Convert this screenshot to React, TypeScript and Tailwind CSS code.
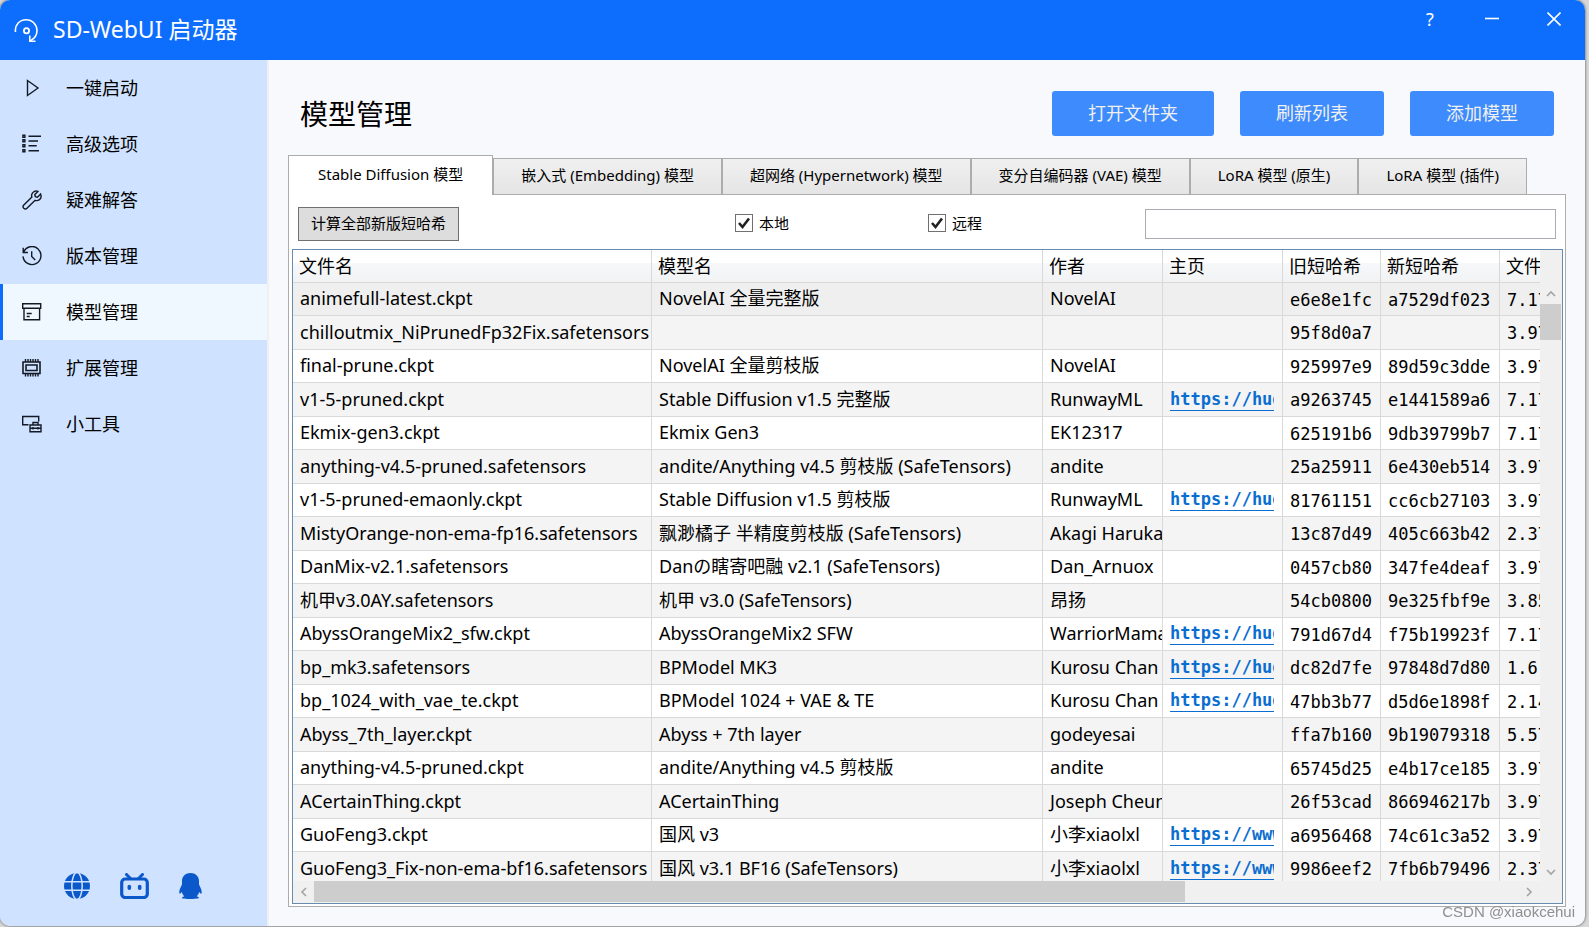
import { useState } from 'react'
import type { ReactNode } from 'react'

const models = [
  ['animefull-latest.ckpt', 'NovelAI 全量完整版', 'NovelAI', '', 'e6e8e1fc', 'a7529df023', '7.17'],
  ['chilloutmix_NiPrunedFp32Fix.safetensors', '', '', '', '95f8d0a7', '', '3.97'],
  ['final-prune.ckpt', 'NovelAI 全量剪枝版', 'NovelAI', '', '925997e9', '89d59c3dde', '3.97'],
  ['v1-5-pruned.ckpt', 'Stable Diffusion v1.5 完整版', 'RunwayML', 'https://hug', 'a9263745', 'e1441589a6', '7.17'],
  ['Ekmix-gen3.ckpt', 'Ekmix Gen3', 'EK12317', '', '625191b6', '9db39799b7', '7.17'],
  ['anything-v4.5-pruned.safetensors', 'andite/Anything v4.5 剪枝版 (SafeTensors)', 'andite', '', '25a25911', '6e430eb514', '3.97'],
  ['v1-5-pruned-emaonly.ckpt', 'Stable Diffusion v1.5 剪枝版', 'RunwayML', 'https://hug', '81761151', 'cc6cb27103', '3.97'],
  ['MistyOrange-non-ema-fp16.safetensors', '飘渺橘子 半精度剪枝版 (SafeTensors)', 'Akagi Haruka', '', '13c87d49', '405c663b42', '2.37'],
  ['DanMix-v2.1.safetensors', 'Danの瞎寄吧融 v2.1 (SafeTensors)', 'Dan_Arnuox', '', '0457cb80', '347fe4deaf', '3.97'],
  ['机甲v3.0AY.safetensors', '机甲 v3.0 (SafeTensors)', '昂扬', '', '54cb0800', '9e325fbf9e', '3.85'],
  ['AbyssOrangeMix2_sfw.ckpt', 'AbyssOrangeMix2 SFW', 'WarriorMama', 'https://hug', '791d67d4', 'f75b19923f', '7.17'],
  ['bp_mk3.safetensors', 'BPModel MK3', 'Kurosu Chan', 'https://hug', 'dc82d7fe', '97848d7d80', '1.6'],
  ['bp_1024_with_vae_te.ckpt', 'BPModel 1024 + VAE & TE', 'Kurosu Chan', 'https://hug', '47bb3b77', 'd5d6e1898f', '2.14'],
  ['Abyss_7th_layer.ckpt', 'Abyss + 7th layer', 'godeyesai', '', 'ffa7b160', '9b19079318', '5.57'],
  ['anything-v4.5-pruned.ckpt', 'andite/Anything v4.5 剪枝版', 'andite', '', '65745d25', 'e4b17ce185', '3.97'],
  ['ACertainThing.ckpt', 'ACertainThing', 'Joseph Cheung', '', '26f53cad', '866946217b', '3.97'],
  ['GuoFeng3.ckpt', '国风 v3', '小李xiaolxl', 'https://www', 'a6956468', '74c61c3a52', '3.97'],
  ['GuoFeng3_Fix-non-ema-bf16.safetensors', '国风 v3.1 BF16 (SafeTensors)', '小李xiaolxl', 'https://www', '9986eef2', '7fb6b79496', '2.37'],
]

const columns = ['文件名', '模型名', '作者', '主页', '旧短哈希', '新短哈希', '文件大小']

const tabs = [
  'Stable Diffusion 模型',
  '嵌入式 (Embedding) 模型',
  '超网络 (Hypernetwork) 模型',
  '变分自编码器 (VAE) 模型',
  'LoRA 模型 (原生)',
  'LoRA 模型 (插件)',
]

const Icon = ({ children }: { children: ReactNode }) => (
  <svg width="20" height="20" viewBox="0 0 20 20" fill="none" stroke="#141a24" strokeWidth="1.4" aria-hidden="true">
    {children}
  </svg>
)

const navItems = [
  { label: '一键启动', icon: <Icon><path d="M5.5 2.5v15L16 10z" /></Icon> },
  {
    label: '高级选项',
    icon: (
      <Icon>
        <path d="M.9 1.2h2v2h-2zM.9 5.8h2v2h-2zM.9 10.8h2v2h-2zM.9 15.8h2v2h-2z" />
        <path d="M6.5 2.2H19M6.5 7H16M6.5 11.8h8.2M6.5 16.8H17" />
      </Icon>
    ),
  },
  {
    label: '疑难解答',
    icon: (
      <Icon>
        <path d="M15.9 1.4 12.8 4.5l.5 2.2 2.2.5 3.1-3.1c1 2.4.2 4.7-1.5 5.8-1.2.8-2.7.8-4 .4L5 18.2c-.9.9-2.3.9-3.2.1-.9-.9-.9-2.3 0-3.2L9.9 7.1c-.5-1.4-.3-3.2.9-4.5 1.3-1.4 3.3-1.9 5.1-1.2z" />
      </Icon>
    ),
  },
  {
    label: '版本管理',
    icon: (
      <Icon>
        <path d="M1.2 1.8v4.7h4.7M1.6 6.2A9 9 0 1 1 1 10.4M9.7 5.2v5.3l3.5 3.5" />
      </Icon>
    ),
  },
  {
    label: '模型管理',
    icon: (
      <Icon>
        <path d="M.7 1.7h18v4.6h-18zM2 6.3v11.4h15.6V6.3M4.7 11.5h5M4.7 14.5h3" />
      </Icon>
    ),
  },
  {
    label: '扩展管理',
    icon: (
      <Icon>
        <path d="M1 4h17v11.5H1zM4 7h11v5.5H4z" strokeWidth="1.6" />
        <path d="M3.5 1v3M6 1v3M8.5 1v3M11 1v3M13.5 1v3M16 1v3M3.5 15.5v3M6 15.5v3M8.5 15.5v3M11 15.5v3M13.5 15.5v3M16 15.5v3" />
      </Icon>
    ),
  },
  {
    label: '小工具',
    icon: (
      <Icon>
        <path d="M6.5 10.7H.7V2.5h16v5" />
        <path d="M8 11h11v6.8H8zM11 11V8.5h5V11M8 14.3h11M11 13v2.5M16 13v2.5" />
      </Icon>
    ),
  },
]

function Chevron({ d }: { d: string }) {
  return (
    <svg width="10" height="10" viewBox="0 0 10 10" fill="none" stroke="#a3a3a3" strokeWidth="1.6" aria-hidden="true">
      <path d={d} />
    </svg>
  )
}

function CheckBox({ label }: { label: string }) {
  return (
    <label className="flex items-center gap-[6px] text-[15px] leading-5">
      <span className="grid">
        <input
          type="checkbox"
          defaultChecked
          className="peer col-start-1 row-start-1 size-[18px] appearance-none border border-[#707070] bg-white"
        />
        <svg
          viewBox="0 0 18 18"
          className="pointer-events-none invisible col-start-1 row-start-1 size-[18px] peer-checked:visible"
          fill="none"
          stroke="#212121"
          strokeWidth="2.6"
          aria-hidden="true"
        >
          <path d="M4 9l3.5 4L14 4.5" />
        </svg>
      </span>
      {label}
    </label>
  )
}

function TitleBar() {
  return (
    <header className="flex h-[60px] shrink-0 items-start justify-between bg-[#0d6efd] text-white">
      <div className="flex h-full items-center gap-[14px] pl-[14px]">
        <svg width="25" height="25" viewBox="0 0 25 25" fill="none" stroke="#fff" strokeWidth="1.6" aria-hidden="true">
          <path d="M1.5 14C.5 7 5.5 1.7 12 1.7c6.5 0 11 5 11 11 0 4-2 7.5-6.8 10.3" />
          <path d="M15.8 17.5v5.8h5.7" />
          <circle cx="12.5" cy="12.8" r="2.6" strokeWidth="1.8" />
        </svg>
        <h1 className="pb-[2px] text-[23px] leading-8">SD-WebUI 启动器</h1>
      </div>
      <div className="flex">
        <button aria-label="帮助" className="flex h-[38px] w-[62px] items-center justify-center text-[18px]">
          ?
        </button>
        <button aria-label="最小化" className="flex h-[38px] w-[62px] items-center justify-center">
          <svg width="14" height="14" viewBox="0 0 14 14" stroke="#fff" strokeWidth="1.6" aria-hidden="true">
            <path d="M0 6.5h14" />
          </svg>
        </button>
        <button aria-label="关闭" className="flex h-[38px] w-[62px] items-center justify-center">
          <svg width="14" height="14" viewBox="0 0 14 14" stroke="#fff" strokeWidth="1.6" aria-hidden="true">
            <path d="M.5.5l13 13M13.5.5l-13 13" />
          </svg>
        </button>
      </div>
    </header>
  )
}

function Sidebar() {
  const [active, setActive] = useState(4)

  return (
    <aside className="flex w-[269px] shrink-0 flex-col justify-between border-r-2 border-[#f0f0f0] bg-[#cfe2ff]">
      <nav className="flex flex-col">
        {navItems.map((item, i) => (
          <button
            key={item.label}
            onClick={() => setActive(i)}
            className={`flex h-14 items-center gap-6 border-l-[3px] pl-[19px] text-left text-[18px] ${
              i === active ? 'border-[#0d6efd] bg-[#f0f8ff]' : 'border-transparent'
            }`}
          >
            {item.icon}
            {item.label}
          </button>
        ))}
      </nav>

      {/* Social links */}
      <div className="flex items-center gap-[30px] pb-[27px] pl-[64px]">
        <a href="#" aria-label="主页">
          <svg width="26" height="26" viewBox="0 0 26 26" aria-hidden="true">
            <circle cx="13" cy="13" r="13" fill="#0a58ca" />
            <g fill="none" stroke="#cfe2ff" strokeWidth="1.5">
              <ellipse cx="13" cy="13" rx="5.2" ry="13.5" />
              <path d="M0 8.8h26M0 17.2h26" />
            </g>
          </svg>
        </a>
        <a href="#" aria-label="哔哩哔哩">
          <svg width="29" height="26" viewBox="0 0 29 26" fill="none" stroke="#0a58ca" aria-hidden="true">
            <rect x="1.7" y="6" width="25.6" height="18.5" rx="3.5" strokeWidth="3.2" />
            <path d="M6.5 1.5l4 4M22.5 1.5l-4 4" strokeWidth="3" strokeLinecap="round" />
            <path d="M9.3 13.5v1.8M19.7 13.5v1.8" strokeWidth="3.6" strokeLinecap="round" />
          </svg>
        </a>
        <a href="#" aria-label="QQ">
          <svg width="23" height="26" viewBox="0 0 23 26" fill="#0a58ca" aria-hidden="true">
            <path d="M11.5 0C6.500 0 3 3.500 3 8v3.500C1.500 14.500-.2 17.800.4 20.300c.5.900 1.700-.2 2.500-1.300.4 1.700 1.100 3 2.300 4.200-1.400.5-2.200 1.200-2.200 1.800 0 1.300 15.200 1.300 17 0 0-.6-.8-1.300-2.200-1.800 1.200-1.200 1.900-2.500 2.300-4.200.8 1.100 2 2.200 2.500 1.300.6-2.500-1.100-5.800-2.600-8.800V8c0-4.500-3.500-8-8.500-8z" />
          </svg>
        </a>
      </div>
    </aside>
  )
}

function Cell({ column, value }: { column: number; value: string }) {
  if (column === 3) {
    return value ? (
      <a href={value} className="mr-2 block overflow-hidden border-b border-[#0a6ed1] font-['DejaVu_Sans_Mono','Noto_Sans_CJK_SC',monospace] text-[17px] leading-[21px] font-bold text-[#0a6ed1]">
        {value}
      </a>
    ) : null
  }
  if (column > 3) {
    return <span className="font-['DejaVu_Sans_Mono','Noto_Sans_CJK_SC',monospace] text-[17px]">{value}</span>
  }
  return <>{value}</>
}

function ModelTable() {
  return (
    <table className="w-[1367px] table-fixed border-separate border-spacing-0 text-[18px] leading-6">
      <colgroup>
        <col className="w-[359px]" />
        <col className="w-[391px]" />
        <col className="w-[120px]" />
        <col className="w-[120px]" />
        <col className="w-[98px]" />
        <col className="w-[119px]" />
        <col className="w-[160px]" />
      </colgroup>
      <thead>
        <tr className="h-[33px] bg-linear-to-b from-white from-40% via-[#f7f8fa] via-40% to-[#f1f2f4]">
          {columns.map((c) => (
            <th key={c} className="border-r border-b border-[#d9d9d9] py-0 pr-0 pl-[6px] text-left font-normal">
              {c}
            </th>
          ))}
        </tr>
      </thead>
      <tbody>
        {models.map((row, i) => (
          <tr
            key={row[0]}
            className={`h-[33px] even:h-[34px] even:bg-[#f4f4f4] ${i === 0 ? 'bg-[#efefef]' : 'bg-white'}`}
          >
            {row.map((value, c) => (
              <td
                key={c}
                className={`overflow-hidden border-r border-b border-[#d9d9d9] pt-0 pr-0 pl-[7px] whitespace-nowrap ${
                  c < 3 ? 'pb-[2px]' : 'pb-0'
                }`}
              >
                <Cell column={c} value={value} />
              </td>
            ))}
          </tr>
        ))}
      </tbody>
    </table>
  )
}

function ModelPanel() {
  return (
    <div className="flex min-h-0 flex-1 flex-col border border-[#acacac] bg-white pr-[2px] pb-[2px] pl-[3px]">
      {/* Toolbar */}
      <div className="flex h-[54px] shrink-0 items-center pt-[3px] pr-[7px] pl-[6px]">
        <div className="flex-[437]">
          <button className="h-[34px] border border-[#707070] bg-[#dddddd] px-3 pb-[2px] text-[15px] leading-5">计算全部新版短哈希</button>
        </div>
        <div className="flex-[193] pb-[2px]">
          <CheckBox label="本地" />
        </div>
        <div className="flex-[217] pb-[2px]">
          <CheckBox label="远程" />
        </div>
        <div className="flex-[411]">
          <input aria-label="搜索模型" className="block h-[30px] w-full border border-[#abadb3] bg-white px-2 text-[15px]" />
        </div>
      </div>

      <div className="flex min-h-0 flex-1 flex-col border border-[#688caf] bg-[#f0f0f0]">
        <div className="flex min-h-0 flex-1">
          <div className="min-w-0 flex-1 overflow-hidden bg-white">
            <ModelTable />
          </div>
          <div className="flex w-[22px] flex-col items-center justify-between pt-[39px] pb-1">
            <div className="flex w-full flex-col items-center gap-[5px]">
              <Chevron d="M1 7l4-4 4 4" />
              <div className="mr-px h-9 w-[21px] bg-[#cdcdcd]" />
            </div>
            <Chevron d="M1 3l4 4 4-4" />
          </div>
        </div>
        <div className="flex h-[22px] items-center pr-[28px] pl-[6px]">
          <Chevron d="M7 1L3 5l4 4" />
          <div className="ml-[5px] flex h-full flex-1 items-start">
            <div className="h-[21px] w-[72%] bg-[#cdcdcd]" />
          </div>
          <Chevron d="M3 1l4 4-4 4" />
        </div>
      </div>
    </div>
  )
}

function App() {
  const [tab, setTab] = useState(0)

  return (
    <div className="h-screen bg-[#d8d8d8] pr-1 pb-px font-['Noto_Sans','Noto_Sans_CJK_SC',sans-serif] text-black">
      <div className="flex h-full flex-col overflow-hidden rounded-[10px] bg-[#f8f9fc] shadow-[0_0_3px_#444]">
        <TitleBar />
        <div className="flex min-h-0 flex-1">
          <Sidebar />
          <main className="flex min-w-0 flex-1 flex-col px-[19px] pb-[19px]">
            <div className="flex h-[95px] shrink-0 items-center justify-between px-3 pt-3">
              <h2 className="text-[28px] leading-9">模型管理</h2>
              <div className="flex gap-[26px] text-[18px] text-[#f0f0f0]">
                <button className="h-[45px] rounded-[3px] bg-[#3d8bfd] px-9">打开文件夹</button>
                <button className="h-[45px] rounded-[3px] bg-[#3d8bfd] px-9">刷新列表</button>
                <button className="h-[45px] rounded-[3px] bg-[#3d8bfd] px-9">添加模型</button>
              </div>
            </div>

            {/* Tabs */}
            <div role="tablist" className="-mb-px flex shrink-0 items-end text-[15px]">
              {tabs.map((t, i) => (
                <button
                  key={t}
                  role="tab"
                  aria-selected={i === tab}
                  onClick={() => setTab(i)}
                  className={
                    i === tab
                      ? 'z-10 h-10 border border-b-0 border-[#acacac] bg-white px-[29px] pb-[2px]'
                      : 'h-[37px] border border-[#acacac] bg-linear-to-b from-[#f0f0f0] to-[#e5e5e5] px-[27px] pb-[2px]'
                  }
                >
                  {t}
                </button>
              ))}
            </div>
            <ModelPanel />
          </main>
        </div>
      </div>
      <div className="fixed right-[14px] bottom-[5px] font-['Liberation_Sans',sans-serif] text-[15px] leading-5 text-[#8f8f8f]">
        CSDN @xiaokcehui
      </div>
    </div>
  )
}

export default App
